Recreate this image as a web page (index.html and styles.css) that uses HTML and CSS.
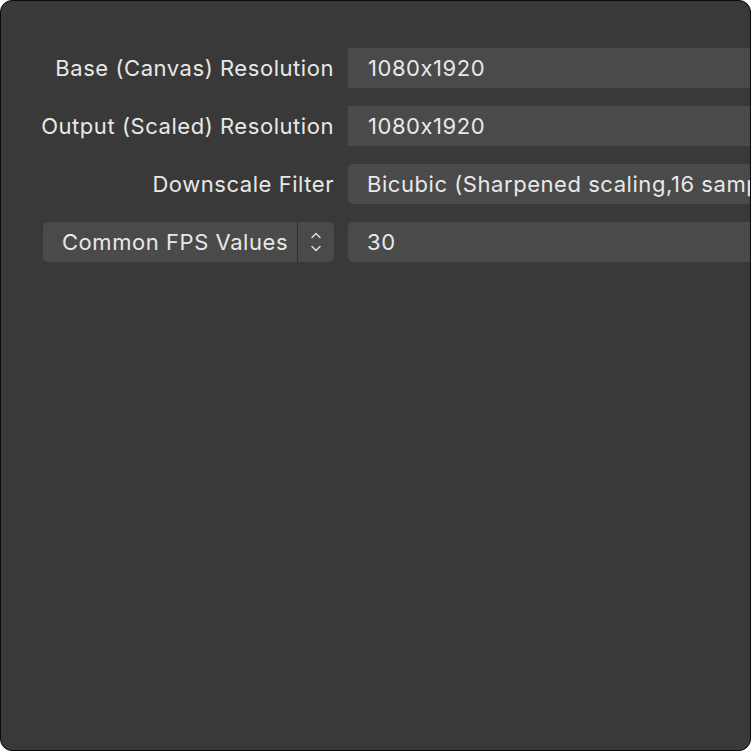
FILE: index.html
```html
<!DOCTYPE html>
<html>
<head>
<meta charset="utf-8">
<link rel="stylesheet" href="styles.css">
</head>
<body>
<div class="window">
  <div class="form">
    <div class="label">Base (Canvas) Resolution</div>
    <div class="field square">1080x1920</div>

    <div class="label">Output (Scaled) Resolution</div>
    <div class="field square">1080x1920</div>

    <div class="label">Downscale Filter</div>
    <div class="field rounded">Bicubic (Sharpened scaling,16 samples)</div>

    <div class="select">
      <span class="select-text">Common FPS Values</span>
      <span class="select-arrows">
        <svg width="14" height="26" viewBox="0 0 14 26">
          <path d="M3 8.5 L7 4.5 L11 8.5" fill="none" stroke="#e0e0e0" stroke-width="1.4" stroke-linecap="round" stroke-linejoin="round"/>
          <path d="M3 17.5 L7 21.5 L11 17.5" fill="none" stroke="#e0e0e0" stroke-width="1.4" stroke-linecap="round" stroke-linejoin="round"/>
        </svg>
      </span>
    </div>
    <div class="field rounded">30</div>
  </div>
</div>
</body>
</html>
```
FILE: styles.css
```css
html, body {
  margin: 0;
  padding: 0;
  background: #ffffff;
}
body {
  width: 752px;
  height: 752px;
  overflow: hidden;
}
.window {
  box-sizing: border-box;
  width: 751px;
  height: 751px;
  border: 1px solid #0a0a0a;
  border-radius: 12px;
  background: #393939;
  overflow: hidden;
  padding-top: 47px;
  padding-left: 42px;
  font-family: Inter, "Noto Sans", sans-serif;
  font-feature-settings: "calt" 0;
  color: #e8e8e8;
  font-size: 22px;
  letter-spacing: 0.55px;
}
.form {
  display: grid;
  grid-template-columns: 291px 500px;
  column-gap: 14px;
  row-gap: 18px;
  grid-auto-rows: 40px;
}
.label {
  display: flex;
  align-items: center;
  justify-content: flex-end;
  white-space: nowrap;
}
.field {
  display: flex;
  align-items: center;
  background: #4a4a4a;
  padding-left: 20px;
  white-space: nowrap;
  overflow: hidden;
}
.field.rounded {
  border-radius: 5px;
  padding-left: 19px;
}
.select {
  display: flex;
  align-items: stretch;
  background: #4a4a4a;
  border-radius: 5px;
}
.select-text {
  flex: 1;
  display: flex;
  align-items: center;
  padding-left: 19px;
  white-space: nowrap;
}
.select-arrows {
  width: 36px;
  border-left: 1px solid #2e2e2e;
  display: flex;
  align-items: center;
  justify-content: center;
}
```
